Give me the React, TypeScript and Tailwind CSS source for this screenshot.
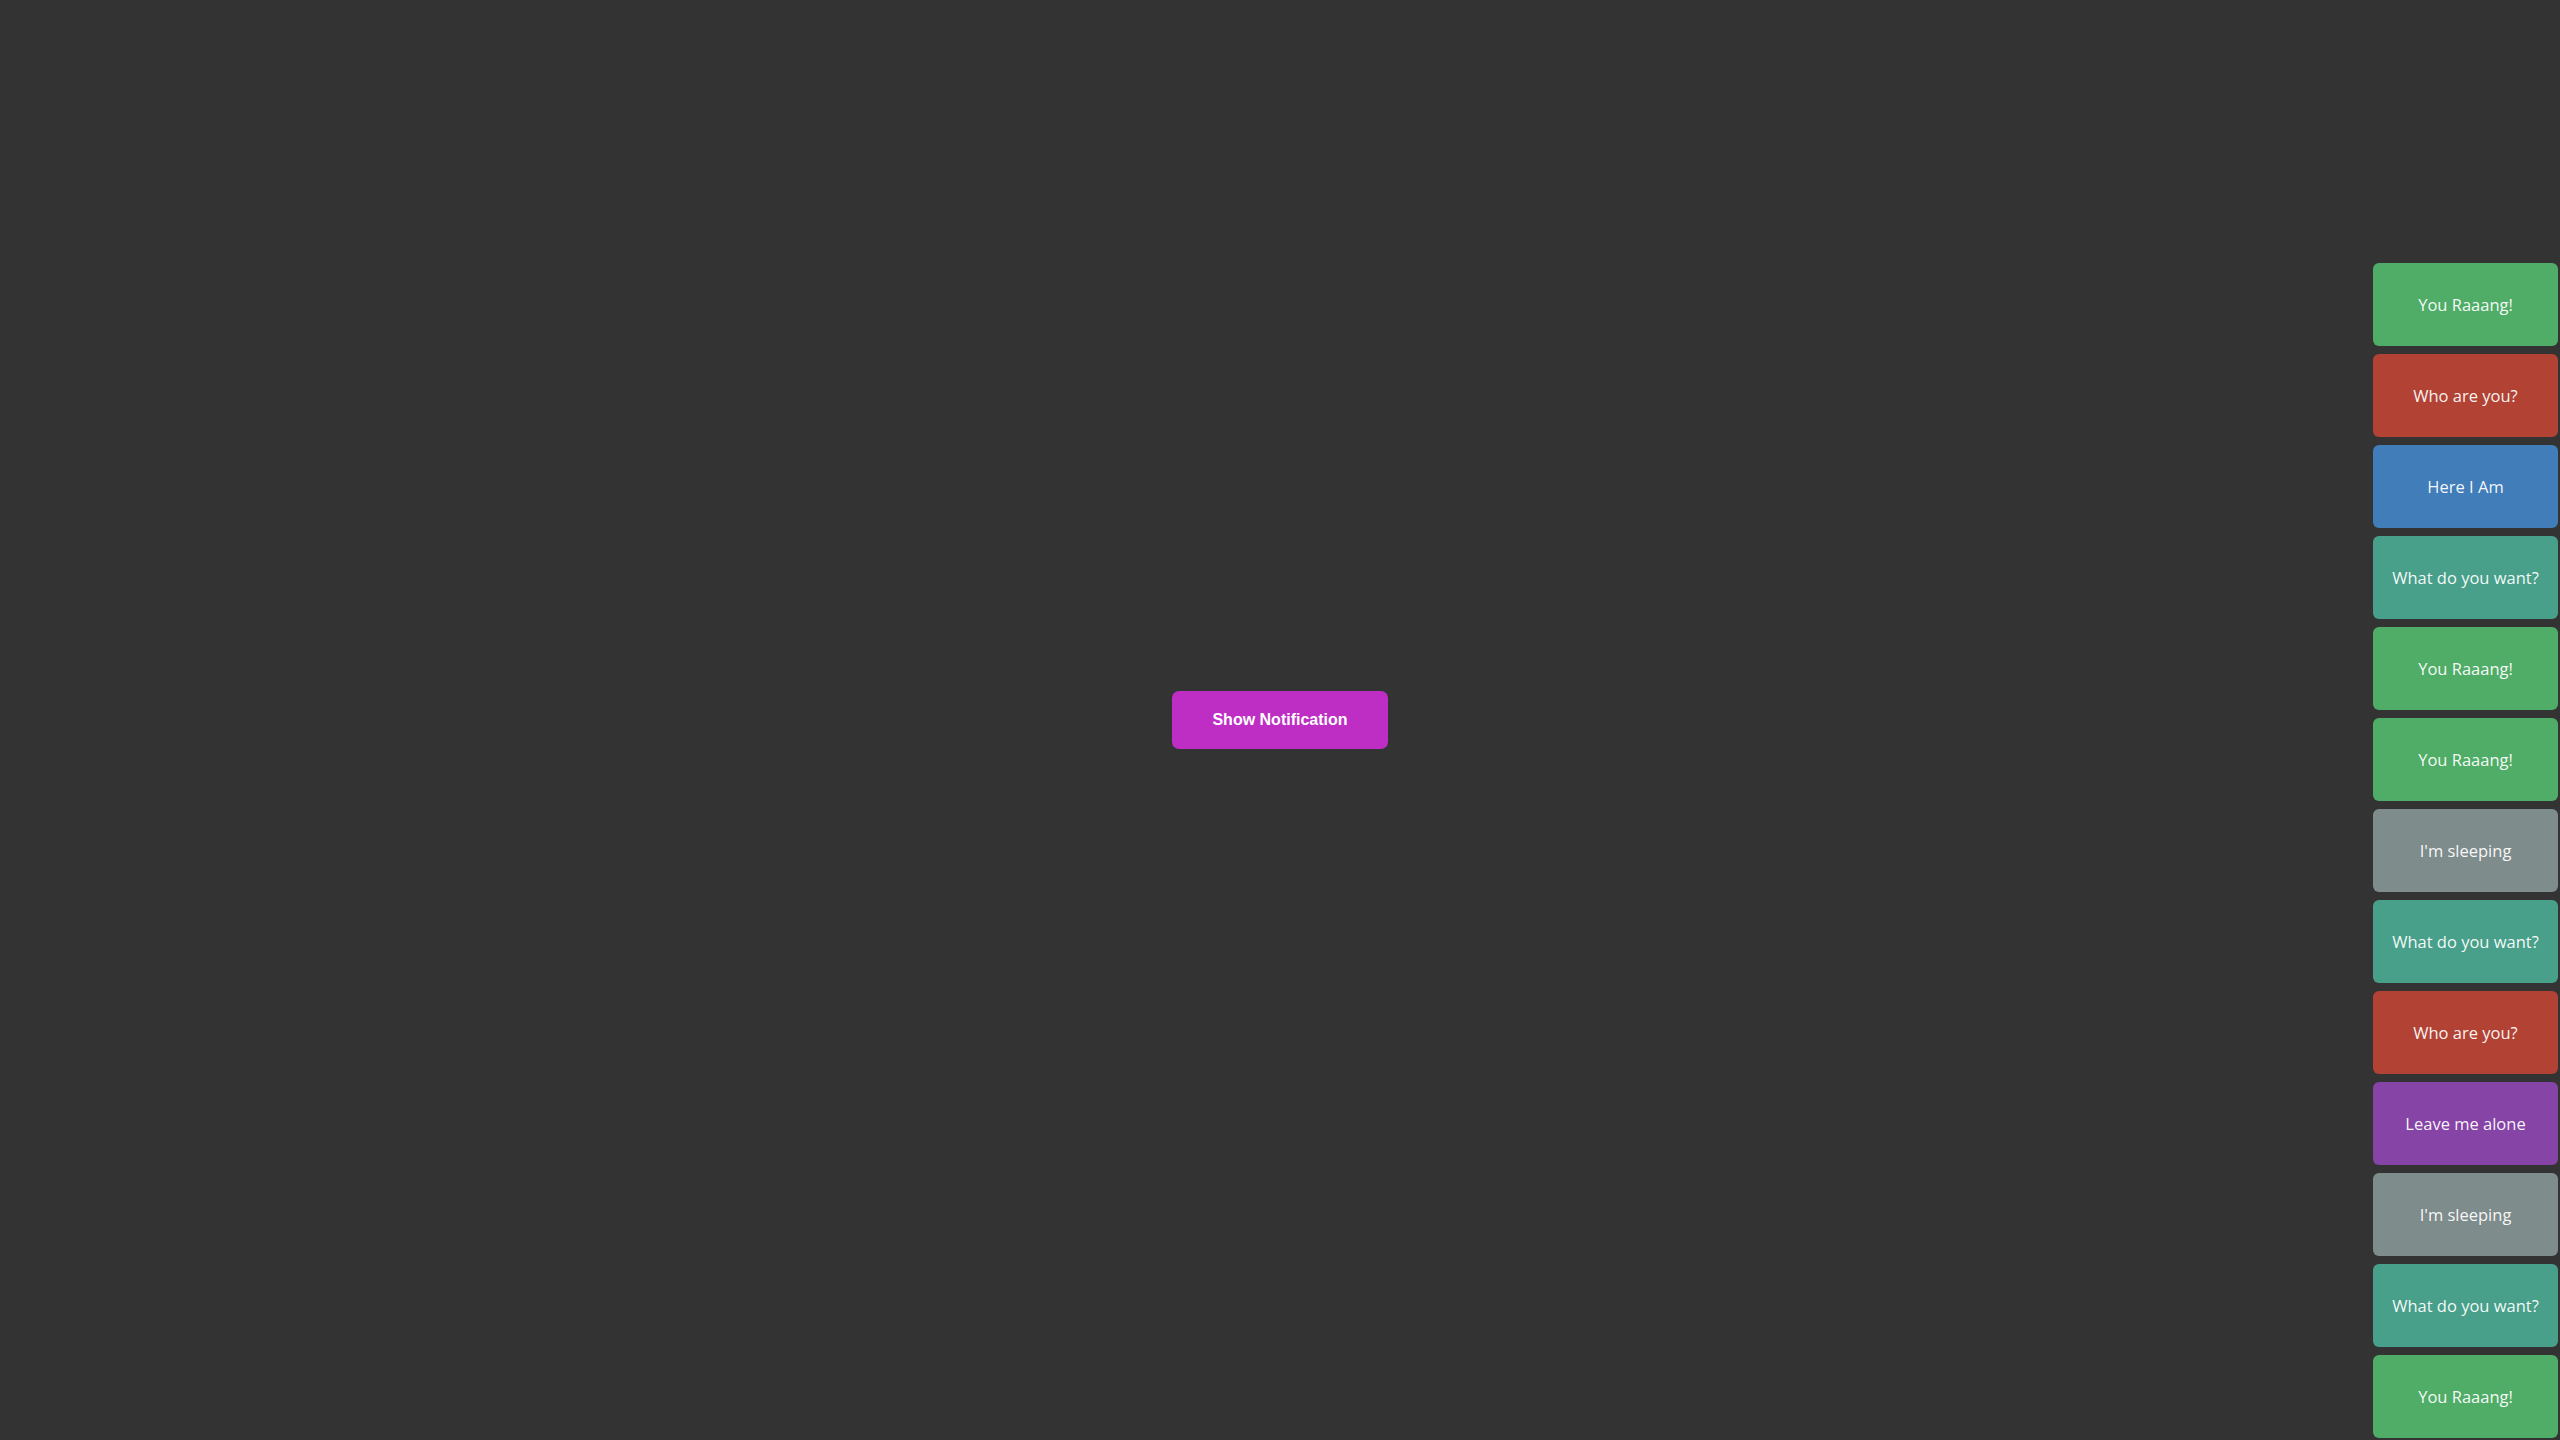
import React from "react";

const toasts: { text: string; cls: string }[] = [
  { text: "You Raaang!", cls: "bg-[#50ad68]" },
  { text: "Who are you?", cls: "bg-[#b24334]" },
  { text: "Here I Am", cls: "bg-[#407db9]" },
  { text: "What do you want?", cls: "bg-[#48a08a]" },
  { text: "You Raaang!", cls: "bg-[#50ad68]" },
  { text: "You Raaang!", cls: "bg-[#50ad68]" },
  { text: "I'm sleeping", cls: "bg-[#7f8c8c]" },
  { text: "What do you want?", cls: "bg-[#48a08a]" },
  { text: "Who are you?", cls: "bg-[#b24334]" },
  { text: "Leave me alone", cls: "bg-[#8644a6]" },
  { text: "I'm sleeping", cls: "bg-[#7f8c8c]" },
  { text: "What do you want?", cls: "bg-[#48a08a]" },
  { text: "You Raaang!", cls: "bg-[#50ad68]" },
];

export default function App() {
  return (
    <div className="w-[2560px] h-[1440px] bg-[#333333] flex overflow-hidden">
      <div className="flex-1 flex items-center justify-center">
        <button className="ml-[190px] w-[216px] h-[58px] rounded-[7px] bg-[#be2dc4] text-white text-[16px] font-bold font-['Liberation_Sans',Arial,sans-serif]">
          Show Notification
        </button>
      </div>
      <div className="w-[190px] flex flex-col justify-end gap-[8px] pl-[3px] pr-[2px] pb-[2px]">
        {toasts.map((t, i) => (
          <div
            key={i}
            className={`${t.cls} h-[83px] w-[185px] rounded-[6px] flex items-center justify-center pt-[2px] text-white/95 text-[16.5px] font-['Open_Sans',Lato,sans-serif]`}
          >
            {t.text}
          </div>
        ))}
      </div>
    </div>
  );
}
